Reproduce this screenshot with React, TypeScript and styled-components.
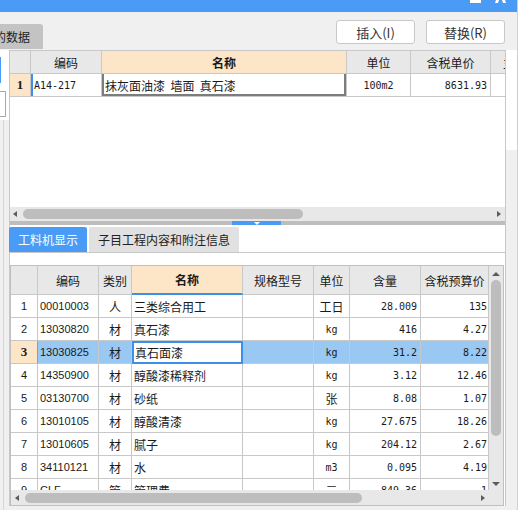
import React from "react"
import styled, { createGlobalStyle } from "styled-components"

const GlobalStyle = createGlobalStyle`
  html, body {
    margin: 0;
    padding: 0;
    background: #f0f0f0;
    overflow: hidden;
  }
  body {
    font-family: "Noto Sans CJK SC", "Liberation Sans", sans-serif;
    font-size: 12px;
    color: #1a1a1a;
  }
`

const BLUE = "#4a9bf5"
const PEACH = "#fde5c8"
const HEAD = "#e8e8e8"
const LINE = "#c8c8c8"
const PICKED = "#99c8f3"

type Align = "left" | "center" | "right"
type Face = "cjk" | "mono" | "sans" | "serif"

const faces: Record<Face, string> = {
  cjk: `font-family: "Noto Sans CJK SC", sans-serif; font-size: 12px;`,
  mono: `font-family: "DejaVu Sans Mono", monospace; font-size: 10px;`,
  sans: `font-family: "Liberation Sans", sans-serif; font-size: 11px;`,
  serif: `font-family: "Liberation Serif", serif; font-size: 13px;`,
}

const Window = styled.div`
  width: 517px;
  height: 510px;
  border-right: 1px solid #cfcfcf;
  display: flex;
  flex-direction: column;
  background: #f0f0f0;
  overflow: hidden;
`

const TitleBar = styled.div`
  flex: none;
  height: 12px;
  background: ${BLUE};
  display: flex;
  justify-content: flex-end;
  align-items: flex-start;
  gap: 14px;
  padding-right: 11px;
`

const MinGlyph = styled.span`
  width: 11px;
  height: 3px;
  background: #fff;
`

const Toolbar = styled.div`
  flex: none;
  height: 38px;
  display: flex;
  align-items: flex-end;
  justify-content: space-between;
`

const DataTab = styled.div`
  width: 43px;
  height: 25px;
  margin-bottom: 1px;
  background: #c3c3c3;
  border-top-right-radius: 3px;
  font-size: 12px;
  line-height: 25px;
  text-indent: -6px;
  white-space: nowrap;
  overflow: hidden;
  color: #222;
`

const ButtonRow = styled.div`
  display: flex;
  gap: 11px;
  margin: 0 12px 6px 0;
`

const Button = styled.button`
  width: 79px;
  height: 24px;
  padding: 0;
  background: #fff;
  border: 1px solid #c9c9c9;
  border-radius: 3px;
  font-family: "Noto Sans CJK SC", sans-serif;
  font-size: 13px;
  color: #333;
`

const Body = styled.div`
  flex: 1;
  display: flex;
  min-height: 0;
`

const LeftStrip = styled.div`
  width: 9px;
  flex: none;
  display: flex;
  flex-direction: column;
`

const LeftTop = styled.div`
  height: 70px;
  background: #fff;
  padding-top: 7px;
  box-sizing: border-box;
`

const BlueMark = styled.div`
  width: 1px;
  height: 26px;
  background: ${BLUE};
`

const GrayBox = styled.div`
  width: 6px;
  height: 26px;
  margin-top: 8px;
  box-sizing: border-box;
  border: 1px solid #a8a8a8;
  border-left: none;
`

const LeftRest = styled.div`
  flex: 1;
  margin-left: 3px;
  border-left: 1px solid #d6d6d6;
`

const Main = styled.div`
  width: 497px;
  height: 456px;
  flex: none;
  box-sizing: border-box;
  border-left: 1px solid ${LINE};
  border-right: 1px solid ${LINE};
  background: #fff;
  display: flex;
  flex-direction: column;
`

const RightStrip = styled.div`
  flex: 1;
  display: flex;
  flex-direction: column;
`

const RightTop = styled.div`
  height: 100px;
  background: #fff;
`

const UpperView = styled.div`
  height: 157px;
  flex: none;
  box-sizing: border-box;
  border-top: 1px solid ${LINE};
  overflow: hidden;
`

const GridRow = styled.div<{ $cols: string; $h: number }>`
  display: grid;
  grid-template-columns: ${p => p.$cols};
  height: ${p => p.$h}px;
`

const Cell = styled.div<{
  $align?: Align
  $face?: Face
  $bg?: string
  $bold?: boolean
  $pad?: string
  $open?: boolean
}>`
  box-sizing: border-box;
  min-width: 0;
  display: flex;
  align-items: center;
  justify-content: ${p =>
    p.$align === "right" ? "flex-end" : p.$align === "center" ? "center" : "flex-start"};
  padding: ${p => p.$pad ?? "0 3px"};
  border-right: ${p => (p.$open ? "none" : `1px solid ${LINE}`)};
  border-bottom: 1px solid ${LINE};
  background: ${p => p.$bg ?? "transparent"};
  white-space: pre;
  overflow: hidden;
  color: #1a1a1a;
  ${p => faces[p.$face ?? "cjk"]}
  font-weight: ${p => (p.$bold ? 700 : 400)};
`

const CodeCell = styled(Cell)`
  box-shadow: inset 2px 0 0 #3f8fe8;
`

const EditCell = styled(Cell)`
  box-shadow: inset 2px 0 0 #7d7d7d, inset -2px 0 0 #7d7d7d, inset 0 -2px 0 #7d7d7d;
`

const SortHead = styled(Cell)`
  border-bottom: 2px solid #3b8fe9;
`

const FocusCell = styled(Cell)`
  background: #fff;
  border-right-color: #3d8fe8;
  border-bottom-color: #3d8fe8;
  box-shadow: inset 2px 2px 0 #3d8fe8, inset -1px -1px 0 #3d8fe8;
`

const PickedMark = styled(Cell)`
  border-right-color: #6aa8ea;
`

const HScroll = styled.div<{ $h: number }>`
  flex: none;
  height: ${p => p.$h}px;
  background: #e8e8e8;
  display: flex;
  align-items: center;
`

const ArrowLeft = styled.span<{ $m: number }>`
  margin-left: ${p => p.$m}px;
  border-right: 4px solid #5c5c5c;
  border-top: 3.5px solid transparent;
  border-bottom: 3.5px solid transparent;
`

const ArrowRight = styled.span<{ $m: number }>`
  margin-right: ${p => p.$m}px;
  border-left: 4px solid #5c5c5c;
  border-top: 3.5px solid transparent;
  border-bottom: 3.5px solid transparent;
`

const ArrowUp = styled.span`
  margin-top: 6px;
  border-bottom: 4px solid #5c5c5c;
  border-left: 4px solid transparent;
  border-right: 4px solid transparent;
`

const ArrowDown = styled.span`
  margin-bottom: 4px;
  border-top: 4px solid #5c5c5c;
  border-left: 4px solid transparent;
  border-right: 4px solid transparent;
`

const HThumb = styled.span<{ $w: number }>`
  width: ${p => p.$w}px;
  height: 10px;
  margin-left: 6px;
  border-radius: 5px;
  background: #bdbdbd;
`

const Fill = styled.span`
  flex: 1;
`

const Splitter = styled.div`
  flex: none;
  height: 4px;
  background: #bdbdbd;
  display: flex;
`

const SplitHandle = styled.div`
  width: 49px;
  margin-left: 222px;
  background: ${BLUE};
  display: flex;
  padding: 1px 0 0 22px;
  box-sizing: border-box;
`

const SplitArrow = styled.span`
  height: 0;
  border-top: 3px solid #fff;
  border-left: 3px solid transparent;
  border-right: 3px solid transparent;
`

const TabBar = styled.div`
  flex: none;
  display: flex;
  gap: 2px;
  height: 26px;
  margin: 2px 0 0 -1px;
  box-sizing: border-box;
  border-bottom: 1px solid ${LINE};
`

const Tab = styled.div<{ $active?: boolean }>`
  height: 25px;
  padding: 0 9px;
  line-height: 25px;
  font-size: 12px;
  border-radius: 2px 2px 0 0;
  background: ${p => (p.$active ? BLUE : "#e1e1e1")};
  color: ${p => (p.$active ? "#fff" : "#222")};
`

const LowerGrid = styled.div`
  flex: none;
  height: 241px;
  margin: 12px 1px 0 0;
  box-sizing: border-box;
  border: 1px solid #c0c0c0;
  display: grid;
  grid-template-columns: 1fr 14px;
  grid-template-rows: 1fr 15px;
`

const TableView = styled.div`
  overflow: hidden;
  min-height: 0;
`

const VScroll = styled.div`
  background: #e8e8e8;
  display: flex;
  flex-direction: column;
  align-items: center;
`

const VThumb = styled.span`
  width: 10px;
  height: 156px;
  margin-top: 4px;
  border-radius: 5px;
  background: #bdbdbd;
`

const Corner = styled.div`
  background: #e8e8e8;
`

const upperCols = "21px 71px 245px 64px 80px 1fr"
const lowerCols = "27px 61px 33px 111px 71px 36px 71px 68px"

const lowerHead = ["", "编码", "类别", "名称", "规格型号", "单位", "含量", "含税预算价"]

const items = [
  ["00010003", "人", "三类综合用工", "", "工日", "28.009", "135"],
  ["13030820", "材", "真石漆", "", "kg", "416", "4.27"],
  ["13030825", "材", "真石面漆", "", "kg", "31.2", "8.22"],
  ["14350900", "材", "醇酸漆稀释剂", "", "kg", "3.12", "12.46"],
  ["03130700", "材", "砂纸", "", "张", "8.08", "1.07"],
  ["13010105", "材", "醇酸清漆", "", "kg", "27.675", "18.26"],
  ["13010605", "材", "腻子", "", "kg", "204.12", "2.67"],
  ["34110121", "材", "水", "", "m3", "0.095", "4.19"],
  ["CLF", "管", "管理费", "", "元", "849.36", "1"],
]

const isLatin = (s: string) => /^[\x00-\x7f]*$/.test(s)

export default function App() {
  return (
    <>
      <GlobalStyle />
      <Window>
        <TitleBar>
          <MinGlyph />
          <svg width="11" height="3" viewBox="0 0 11 3">
            <path d="M1 0h3l-1 3h-3z M7 0h3l1 3h-3z" fill="#fff" />
          </svg>
        </TitleBar>
        <Toolbar>
          <DataTab>的数据</DataTab>
          <ButtonRow>
            <Button>插入(I)</Button>
            <Button>替换(R)</Button>
          </ButtonRow>
        </Toolbar>
        <Body>
          <LeftStrip>
            <LeftTop>
              <BlueMark />
              <GrayBox />
            </LeftTop>
            <LeftRest />
          </LeftStrip>
          <Main>
            <UpperView>
              <GridRow $cols={upperCols} $h={23}>
                <Cell $bg={HEAD} />
                <Cell $bg={HEAD} $align="center">编码</Cell>
                <Cell $bg={PEACH} $align="center" $bold>名称</Cell>
                <Cell $bg={HEAD} $align="center">单位</Cell>
                <Cell $bg={HEAD} $align="center">含税单价</Cell>
                <Cell $bg={HEAD} $open $pad="0 0 0 12px">主要材料</Cell>
              </GridRow>
              <GridRow $cols={upperCols} $h={23}>
                <Cell $bg={PEACH} $align="center" $face="serif" $bold>1</Cell>
                <CodeCell $face="mono" $pad="0 0 0 3px">A14-217</CodeCell>
                <EditCell $pad="0 0 0 3px">{"抹灰面油漆  墙面  真石漆"}</EditCell>
                <Cell $align="center" $face="mono">100m2</Cell>
                <Cell $align="right" $face="mono">8631.93</Cell>
                <Cell $open />
              </GridRow>
            </UpperView>
            <HScroll $h={14}>
              <ArrowLeft $m={3} />
              <HThumb $w={280} />
              <Fill />
              <ArrowRight $m={4} />
            </HScroll>
            <Splitter>
              <SplitHandle>
                <SplitArrow />
              </SplitHandle>
            </Splitter>
            <TabBar>
              <Tab $active>工料机显示</Tab>
              <Tab>子目工程内容和附注信息</Tab>
            </TabBar>
            <LowerGrid>
              <TableView>
                <GridRow $cols={lowerCols} $h={29}>
                  {lowerHead.map((h, i) =>
                    i === 3 ? (
                      <SortHead key={i} $bg={PEACH} $align="center" $bold>
                        {h}
                      </SortHead>
                    ) : (
                      <Cell key={i} $bg={HEAD} $align="center">
                        {h}
                      </Cell>
                    )
                  )}
                </GridRow>
                {items.map((r, i) => {
                  const picked = i === 2
                  const bg = picked ? PICKED : undefined
                  return (
                    <GridRow key={i} $cols={lowerCols} $h={23}>
                      {picked ? (
                        <PickedMark $bg={PEACH} $align="center" $face="serif" $bold>
                          {i + 1}
                        </PickedMark>
                      ) : (
                        <Cell $align="center" $face="sans">
                          {i + 1}
                        </Cell>
                      )}
                      <Cell $bg={bg} $face="sans" $pad="0 0 0 2px">{r[0]}</Cell>
                      <Cell $bg={bg} $align="center">{r[1]}</Cell>
                      {picked ? (
                        <FocusCell $pad="0 0 0 3px">{r[2]}</FocusCell>
                      ) : (
                        <Cell $bg={bg} $pad="0 0 0 2px">{r[2]}</Cell>
                      )}
                      <Cell $bg={bg}>{r[3]}</Cell>
                      <Cell $bg={bg} $align="center" $face={isLatin(r[4]) ? "mono" : "cjk"}>
                        {r[4]}
                      </Cell>
                      <Cell $bg={bg} $align="right" $face="mono">{r[5]}</Cell>
                      <Cell $bg={bg} $align="right" $face="mono" $pad="0 1px 0 0">
                        {r[6]}
                      </Cell>
                    </GridRow>
                  )
                })}
              </TableView>
              <VScroll>
                <ArrowUp />
                <VThumb />
                <Fill />
                <ArrowDown />
              </VScroll>
              <HScroll $h={15}>
                <ArrowLeft $m={4} />
                <HThumb $w={337} />
                <Fill />
                <ArrowRight $m={4} />
              </HScroll>
              <Corner />
            </LowerGrid>
          </Main>
          <RightStrip>
            <RightTop />
          </RightStrip>
        </Body>
      </Window>
    </>
  )
}
